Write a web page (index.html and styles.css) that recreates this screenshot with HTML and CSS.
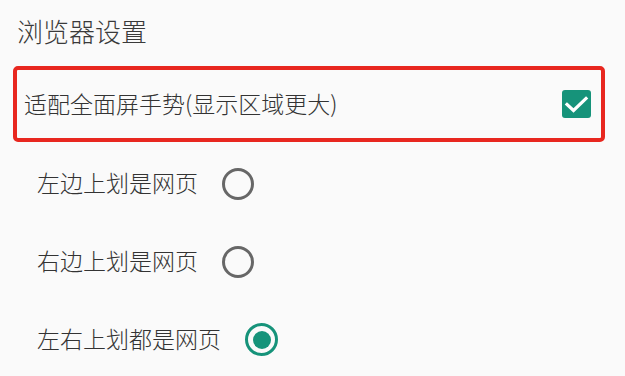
FILE: index.html
```html
<!DOCTYPE html>
<html lang="zh-CN">
<head>
<meta charset="utf-8">
<title>浏览器设置</title>
<link rel="stylesheet" href="styles.css">
</head>
<body>
<div class="page">
  <div class="title">浏览器设置</div>
  <div class="highlight">
    <span class="label">适配全面屏手势(显示区域更大)</span>
    <span class="checkbox">
      <svg width="29" height="28" viewBox="0 0 29 28"><polyline points="5,14.5 11.5,20.5 24,8.5" fill="none" stroke="#fff" stroke-width="3.2" stroke-linecap="square" stroke-linejoin="miter"/></svg>
    </span>
  </div>
  <div class="option">
    <span class="label">左边上划是网页</span>
    <span class="radio"></span>
  </div>
  <div class="option">
    <span class="label">右边上划是网页</span>
    <span class="radio"></span>
  </div>
  <div class="option">
    <span class="label">左右上划都是网页</span>
    <span class="radio checked"></span>
  </div>
</div>
</body>
</html>
```

FILE: styles.css
```css
html, body {
  margin: 0;
  padding: 0;
  background: #fafafa;
}
.page {
  width: 625px;
  height: 376px;
  overflow: hidden;
  font-family: "Noto Sans CJK SC", "Noto Sans", sans-serif;
  font-weight: 300;
  color: #333333;
}
.title {
  height: 64px;
  margin-bottom: 2px;
  padding-left: 17px;
  display: flex;
  align-items: center;
  font-size: 26px;
  line-height: 1;
  color: #3a3a3a;
  box-sizing: border-box;
  padding-bottom: 3px;
}
.highlight {
  width: 592px;
  height: 76px;
  margin-left: 13px;
  box-sizing: border-box;
  border: 4px solid #e8271f;
  border-radius: 5px;
  display: flex;
  align-items: center;
  justify-content: space-between;
  padding: 0 10px 0 7px;
}
.highlight .label {
  font-size: 23px;
  line-height: 1;
  margin-top: -2px;
}
.checkbox {
  width: 29px;
  height: 28px;
  background: #16937a;
  border-radius: 3px;
  display: flex;
}
.option {
  height: 78px;
  padding-left: 37px;
  display: flex;
  align-items: center;
}
.highlight + .option {
  margin-top: 2px;
}
.option .label {
  font-size: 23px;
  line-height: 1;
  margin-top: -2px;
}
.radio {
  width: 32px;
  height: 32px;
  box-sizing: border-box;
  border: 3.3px solid #676767;
  border-radius: 50%;
  margin-left: 24px;
  margin-top: 1px;
  display: flex;
  align-items: center;
  justify-content: center;
}
.radio.checked {
  width: 33px;
  height: 33px;
  border-color: #16937a;
}
.radio.checked::after {
  content: "";
  width: 18px;
  height: 18px;
  border-radius: 50%;
  background: #16937a;
}
```
